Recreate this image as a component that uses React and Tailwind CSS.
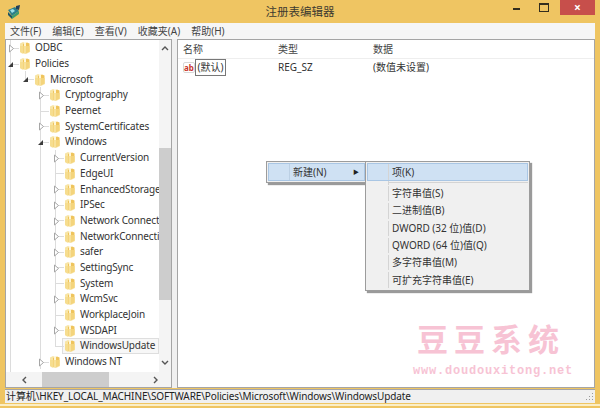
import React from "react";

const font = { fontFamily: '"Noto Sans","Noto Sans CJK SC",sans-serif' };

const rows = [
  ["ODBC", [], 1, "c"],
  ["Policies", [], 1, "o"],
  ["Microsoft", [1], 0, "o"],
  ["Cryptography", [1, 0], 1, "c"],
  ["Peernet", [1, 0], 1, ""],
  ["SystemCertificates", [1, 0], 1, "c"],
  ["Windows", [1, 0], 1, "o"],
  ["CurrentVersion", [1, 0, 1], 1, "c"],
  ["EdgeUI", [1, 0, 1], 1, ""],
  ["EnhancedStorage", [1, 0, 1], 1, "c"],
  ["IPSec", [1, 0, 1], 1, "c"],
  ["Network Connect", [1, 0, 1], 1, "c"],
  ["NetworkConnecti", [1, 0, 1], 1, "c"],
  ["safer", [1, 0, 1], 1, "c"],
  ["SettingSync", [1, 0, 1], 1, "c"],
  ["System", [1, 0, 1], 1, ""],
  ["WcmSvc", [1, 0, 1], 1, "c"],
  ["WorkplaceJoin", [1, 0, 1], 1, ""],
  ["WSDAPI", [1, 0, 1], 1, "c"],
  ["WindowsUpdate", [1, 0, 1], 0, "", true],
  ["Windows NT", [1, 0], 1, "c"],
  ["", [1], 0, ""],
];

function Folder() {
  return (
    <svg width="12" height="13" viewBox="0 0 12 13" className="shrink-0">
      <path d="M1 2.5 L4 1 L6 2 V11 L3.5 12.5 L1 11 Z" fill="#f8e5a6" />
      <path d="M4 3 L8 1.5 L10.5 2.5 V10.5 L7 12.5 L4 12 Z" fill="#efc45c" />
      <path d="M5 2 L7 1 V12 L5 12.5 Z" fill="#fff6d6" />
      <path d="M1 5 H11 V11 L8 12.5 H3 L1 11 Z" fill="#f6d987" opacity="0.75" />
    </svg>
  );
}

function Expander({ kind }) {
  if (kind === "o")
    return (
      <svg width="7" height="7" viewBox="0 0 7 7" className="absolute left-[1px] top-[5px]">
        <path d="M6 1 V6 H1 Z" fill="#3c3c3c" />
      </svg>
    );
  return (
    <svg width="7" height="9" viewBox="0 0 7 9" className="absolute left-[2px] top-[4px]">
      <path d="M1.5 1 L5.5 4.5 L1.5 8 Z" fill="#fff" stroke="#a6a6a6" />
    </svg>
  );
}

function TreeRow({ r }) {
  const [name, guides, cont, kind, selected] = r;
  return (
    <div className="flex h-[15.7px] shrink-0 items-center whitespace-nowrap">
      {guides.map((g, i) => (
        <div key={i} className="h-full w-[15px] shrink-0 pl-[4px]">
          {g ? <div className="h-full w-px bg-[#dcdcdc]" /> : null}
        </div>
      ))}
      {name ? (
        <>
          <div className="relative h-full w-[13px] shrink-0">
            <div className={cont ? "absolute left-[4px] top-0 h-full w-px bg-[#dcdcdc]" : "absolute left-[4px] top-0 h-1/2 w-px bg-[#dcdcdc]"} />
            <div className="absolute left-[4px] top-1/2 h-px w-[9px] bg-[#dcdcdc]" />
            {kind ? <Expander kind={kind} /> : null}
          </div>
          {selected ? (
            <div className="-ml-[2px] flex h-[16px] flex-1 items-center border border-[#dedede] bg-[#f7f7f7] pl-[1px]">
              <Folder />
              <span className="ml-[4px] tracking-[-0.15px] text-[#333]">{name}</span>
            </div>
          ) : (
            <>
              <Folder />
              <span className="ml-[4px] tracking-[-0.15px] text-[#333]">{name}</span>
            </>
          )}
        </>
      ) : null}
    </div>
  );
}

function MenuRow({ children, hot }) {
  return (
    <div className={hot ? "flex h-[18px] items-center border border-[#a9c6e4] bg-[#cfe1f3]" : "flex h-[17.3px] items-center border border-transparent"}>
      <div className="h-full w-[21px] shrink-0 border-r border-[#d4d4d4]" />
      <span className="ml-[3px] flex-1 whitespace-nowrap">{children}</span>
    </div>
  );
}

export default function App() {
  return (
    <div style={font} className="relative flex h-[408px] w-[600px] flex-col overflow-hidden bg-[#efc562] text-[10px] text-[#333]">
      <div className="relative flex h-[23px] shrink-0 items-center justify-center text-[11.5px] text-[#3d3a30]">
        <svg width="16" height="16" viewBox="0 0 16 16" className="absolute left-[6px] top-[4px]">
          <path d="M2 6 L9 3 L13 7 L6 12 Z" fill="#2a7f8c" />
          <path d="M4 6 L7 5 L9 7 L6 9 Z" fill="#9ee0ea" />
          <path d="M2 8 L6 12 V15 L2 11 Z" fill="#1c5564" />
          <path d="M10 2 L14 1 L13 6 L10 5 Z" fill="#23405a" />
          <path d="M6 12 L13 7 V10 L6 15 Z" fill="#3d9b6f" />
        </svg>
        <span>注册表编辑器</span>
        <div className="absolute right-[5px] top-0 flex h-[15px] items-start">
          <div className="flex h-[15px] w-[27px] items-center justify-center">
            <div className="mt-[3px] h-[2px] w-[7px] bg-[#332e1e]" />
          </div>
          <div className="flex h-[15px] w-[27px] items-center justify-center">
            <div className="h-[9px] w-[10px] border border-t-[2px] border-[#332e1e]" />
          </div>
          <div className="ml-[3px] flex h-[15px] w-[35px] items-center justify-center bg-[#c74f4b] text-[12px] font-bold leading-none text-white">×</div>
        </div>
      </div>

      <div className="mx-[5px] flex h-[16px] shrink-0 items-center gap-[11px] bg-[#f6f6f6] pl-[5px] text-[#444]">
        <span>文件(F)</span>
        <span>编辑(E)</span>
        <span>查看(V)</span>
        <span>收藏夹(A)</span>
        <span>帮助(H)</span>
      </div>

      <div className="mx-[5px] flex h-[349px] shrink-0 bg-[#f0f0f0]">
        <div className="flex w-[167px] shrink-0 flex-col border border-[#a5a5a5] bg-white">
          <div className="flex min-h-0 flex-1">
            <div className="flex w-[154px] flex-col overflow-hidden">
              {rows.map((r, i) => (
                <TreeRow key={i} r={r} />
              ))}
            </div>
            <div className="flex w-[12px] shrink-0 flex-col bg-[#f4f4f4]">
              <div className="flex h-[16px] items-center justify-center">
                <svg width="8" height="6" viewBox="0 0 8 6"><path d="M1 5 L4 2 L7 5" fill="none" stroke="#555" strokeWidth="1.4" /></svg>
              </div>
              <div className="h-[92px]" />
              <div className="h-[152px] bg-[#cdcdcd]" />
              <div className="flex-1" />
              <div className="flex h-[18px] items-center justify-center">
                <svg width="8" height="6" viewBox="0 0 8 6"><path d="M1 1 L4 4 L7 1" fill="none" stroke="#555" strokeWidth="1.4" /></svg>
              </div>
            </div>
          </div>
          <div className="flex h-[15px] shrink-0 items-center bg-[#f4f4f4]">
            <div className="flex w-[36px] items-center justify-center">
              <svg width="6" height="8" viewBox="0 0 6 8"><path d="M5 1 L2 4 L5 7" fill="none" stroke="#555" strokeWidth="1.4" /></svg>
            </div>
            <div className="h-full w-[67px] bg-[#cdcdcd]" />
            <div className="ml-[41px] flex w-[12px] items-center justify-center">
              <svg width="6" height="8" viewBox="0 0 6 8"><path d="M1 1 L4 4 L1 7" fill="none" stroke="#555" strokeWidth="1.4" /></svg>
            </div>
          </div>
        </div>
        <div className="w-[5px] shrink-0" />
        <div className="min-w-0 flex-1 border border-[#a5a5a5] bg-white">
          <div className="grid h-[19px] grid-cols-[95px_95px_1fr] items-center border-b border-[#eeeeee] pl-[5px] text-[#444]">
            <span>名称</span>
            <span>类型</span>
            <span>数据</span>
          </div>
          <div className="grid h-[16px] grid-cols-[95px_95px_1fr] items-center pl-[5px]">
            <div className="flex items-center">
              <span className="flex h-[11px] w-[12px] items-center justify-center rounded-[2px] border border-[#d8d8d8] text-[8px] font-bold leading-none text-[#c8352b]">ab</span>
              <span className="flex h-[17px] w-[31px] items-center justify-center border border-[#777] bg-white text-[#333]">(默认)</span>
            </div>
            <span>REG_SZ</span>
            <span>(数值未设置)</span>
          </div>
        </div>
      </div>

      <div className="mx-[5px] mt-[1px] flex h-[14px] shrink-0 items-center justify-between border-t border-[#a5a5a5] bg-[#f0f0f0] pl-[1px] pr-[1px] text-[#222]">
        <span className="whitespace-nowrap tracking-[-0.11px]">计算机\HKEY_LOCAL_MACHINE\SOFTWARE\Policies\Microsoft\Windows\WindowsUpdate</span>
        <svg width="10" height="10" viewBox="0 0 10 10"><path d="M8 1h1v1H8zM5 4h1v1H5zM8 4h1v1H8zM2 7h1v1H2zM5 7h1v1H5zM8 7h1v1H8z" fill="#9a9a9a" /></svg>
      </div>
      <div className="mt-[1px] h-[2px] shrink-0 bg-[#fbeec6]" />

      <div className="absolute left-[266px] top-[161px] h-[22px] w-[101px] border border-[#9c9c9c] bg-[#f0f0f0] p-[1px] text-[#333] shadow-[2px_2px_1px_#9a9a9a]">
        <div className="flex h-[18px] items-center border border-[#a9c6e4] bg-[#cfe1f3]">
          <div className="h-full w-[21px] shrink-0 border-r border-[#bcd0e4]" />
          <span className="ml-[3px] flex-1 whitespace-nowrap">新建(N)</span>
          <span className="mr-[5px] text-[6px] text-[#222]">▶</span>
        </div>
      </div>

      <div className="absolute left-[365px] top-[161px] h-[130px] w-[165px] border border-[#9c9c9c] bg-[#f0f0f0] p-[1px] text-[#333] shadow-[2px_2px_1px_#9a9a9a]">
        <MenuRow hot>项(K)</MenuRow>
        <div className="flex h-[4px]">
          <div className="w-[22px] shrink-0 border-r border-[#d4d4d4]" />
          <div className="mt-[1px] h-px flex-1 bg-[#d4d4d4]" />
        </div>
        {["字符串值(S)", "二进制值(B)", "DWORD (32 位)值(D)", "QWORD (64 位)值(Q)", "多字符串值(M)", "可扩充字符串值(E)"].map((t) => (
          <MenuRow key={t}>{t}</MenuRow>
        ))}
      </div>

      <div style={{ fontFamily: '"Noto Sans CJK SC",sans-serif' }} className="absolute left-[417px] top-[320px] whitespace-nowrap text-[31px] font-bold leading-[36px] tracking-[6px] text-[#f7c3d4]">豆豆系统</div>
      <div style={{ fontFamily: '"Liberation Mono",monospace' }} className="absolute left-[413px] top-[364px] whitespace-nowrap text-[12px] font-bold leading-[14px] tracking-[0.8px] text-[#f7c3d4]">
        www.doudouxitong.net
      </div>
    </div>
  );
}
